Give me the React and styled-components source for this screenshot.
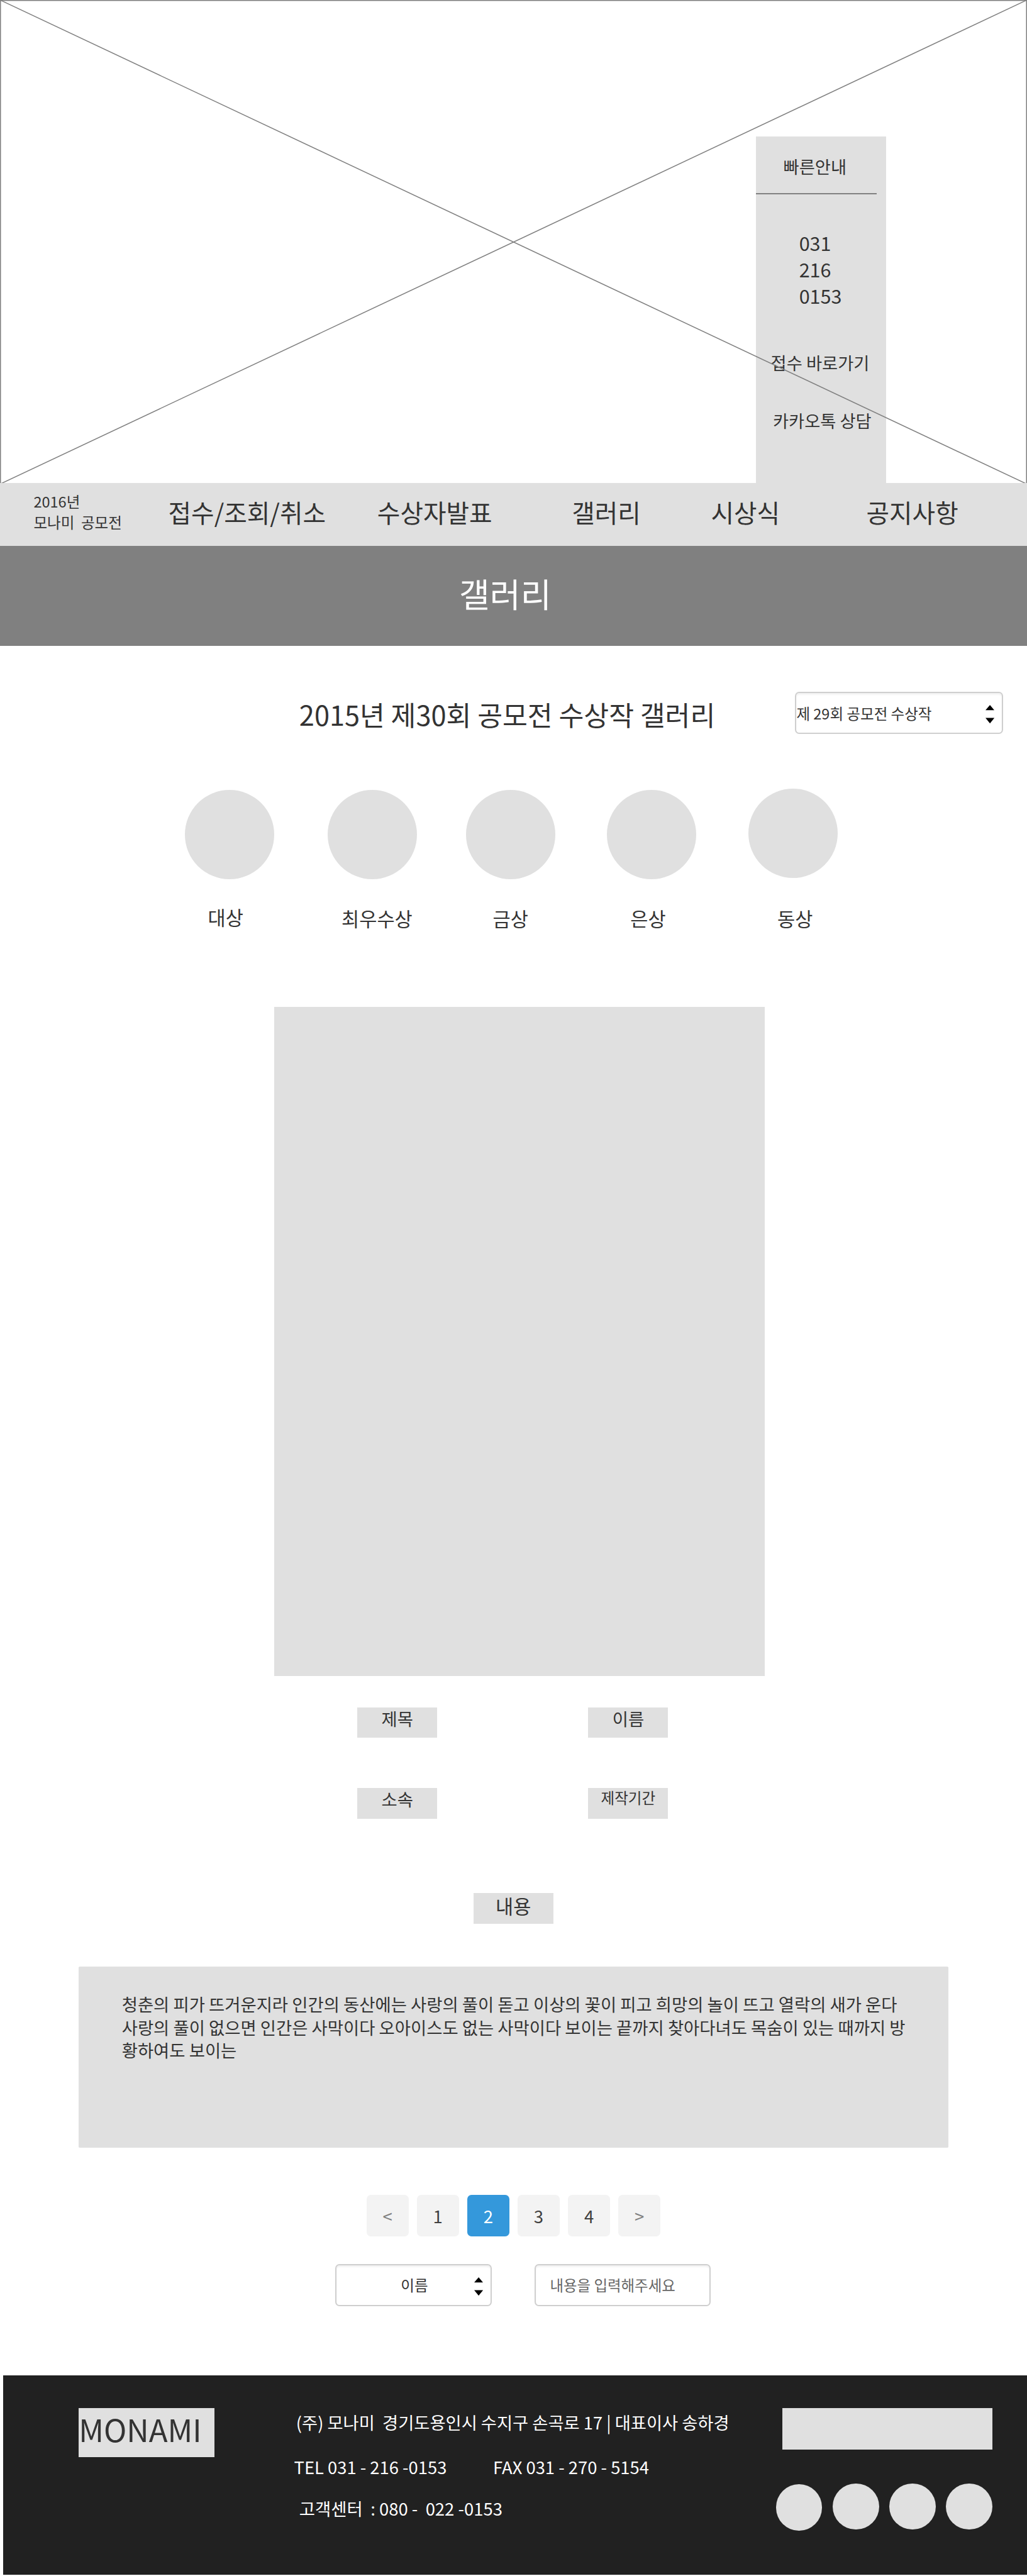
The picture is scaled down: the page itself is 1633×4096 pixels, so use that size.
import React from "react";
import styled, { createGlobalStyle, css } from "styled-components";

// Design units are scaled to the 1633px wide page.
const SCALE = 1633 / 1956;
const u = (n) => `${Math.round(n * SCALE * 1000) / 1000}px`;

const color = {
  block: "#e0e0e0",
  gray: "#808080",
  ink: "#333333",
  footer: "#212121",
  blue: "#3498db",
  border: "#cccccc",
};

const GlobalStyle = createGlobalStyle`
  * { box-sizing: border-box; }
  html, body { margin: 0; padding: 0; background: #fff; }
  body {
    font-family: "Noto Sans CJK KR", "Noto Sans", sans-serif;
    color: ${color.ink};
    overflow-x: hidden;
  }
  button, input { font-family: inherit; }
`;

const Page = styled.div`
  width: ${u(1956)};
  height: 4096px;
  overflow: hidden;
  display: flex;
  flex-direction: column;
`;

const Text = styled.div`
  font-size: ${(p) => u(p.$size)};
  line-height: ${(p) => u(p.$line || 48)};
  margin-top: ${(p) => u(p.$top || 0)};
  margin-left: ${(p) => u(p.$left || 0)};
  white-space: pre;
`;

/* Hero */
const Hero = styled.section`
  position: relative;
  height: ${u(920)};
  padding: ${u(260)} 0 0 ${u(1440)};
  overflow: hidden;
`;

const HeroCross = styled.svg`
  position: absolute;
  inset: 0;
  width: 100%;
  height: 100%;
  pointer-events: none;
`;

const QuickPanel = styled.aside`
  width: ${u(248)};
  height: ${u(660)};
  padding-top: ${u(32)};
  background: ${color.block};
`;

const PanelRule = styled.hr`
  width: ${u(230)};
  height: ${u(2)};
  margin: ${u(28)} 0 0;
  border: 0;
  background: ${color.gray};
`;

/* Navigation */
const Nav = styled.nav`
  display: flex;
  height: ${u(120)};
  background: ${color.block};
`;

const Brand = styled.div`
  width: ${u(320.5)};
  padding: ${u(15)} 0 0 ${u(64)};
`;

const NavLink = styled.a`
  width: ${(p) => u(p.$width)};
  padding-top: ${u(24.5)};
  font-size: ${u(47.6)};
  line-height: ${u(60)};
  white-space: nowrap;
`;

const TitleBar = styled.header`
  height: ${u(190)};
  padding: ${u(50)} 0 0 ${u(874)};
  background: ${color.gray};
  color: #fff;
`;

/* Controls */
const controlBox = css`
  height: ${u(80)};
  border: 2px solid #cfcfcf;
  border-radius: ${u(8)};
  background: #fff;
  box-shadow: inset 0 ${u(3)} ${u(3)} rgba(0, 0, 0, 0.06);
`;

const SelectBox = styled.div`
  ${controlBox}
  display: flex;
  justify-content: space-between;
  width: ${(p) => u(p.$width)};
  padding-right: ${u(14.2)};
  padding-left: ${(p) => u(p.$indent)};
  color: ${color.ink};
`;

const Arrows = styled.svg`
  width: ${u(17)};
  height: ${u(35)};
  margin-top: ${u(22.8)};
`;

const SearchInput = styled.input`
  ${controlBox}
  width: ${u(335.5)};
  margin-left: ${u(81)};
  padding: 0 0 ${u(1)} ${u(27)};
  font-size: ${u(28.1)};
  outline: none;
  &::placeholder { color: #666; opacity: 1; }
`;

/* Gallery */
const GalleryHead = styled.div`
  display: flex;
  padding-top: ${u(88)};
  height: ${u(272)};
`;

const GalleryTitle = styled.h2`
  width: ${u(944.5)};
  margin: ${u(11)} 0 0 ${u(570)};
  font-size: ${u(51.9)};
  font-weight: 400;
  line-height: ${u(64)};
  white-space: nowrap;
`;

const Awards = styled.div`
  display: flex;
  height: ${u(416)};
  padding-left: ${u(352)};
`;

const Award = styled.div`
  width: ${(p) => u(p.$width)};
  margin-top: ${(p) => u(p.$raise ? 0 : 2)};
`;

const Circle = styled.div`
  width: ${(p) => u(p.$size)};
  height: ${(p) => u(p.$size)};
  margin-top: ${(p) => u(p.$top || 0)};
  border-radius: 50%;
  background: ${color.block};
`;

const Artwork = styled.div`
  width: ${u(934)};
  height: ${u(1274)};
  margin-left: ${u(522)};
  background: ${color.block};
`;

const Details = styled.div`
  display: grid;
  grid-template-columns: ${u(440)} ${u(152)};
  grid-template-rows: ${u(154)} ${u(58)};
  margin: ${u(60)} 0 0 ${u(680)};
`;

const Tag = styled.div`
  width: ${u(152)};
  height: ${u(58)};
  padding-left: ${(p) => u(p.$indent)};
  background: ${color.block};
`;

const ContentTagRow = styled.div`
  margin: ${u(142)} 0 0 ${u(902)};
`;

const Description = styled.p`
  width: ${u(1656)};
  height: ${u(344)};
  margin: ${u(82)} 0 0 ${u(150)};
  padding: ${u(48.5)} 0 0 ${u(82)};
  border-radius: ${u(2)};
  background: ${color.block};
  font-size: ${u(32.85)};
  line-height: ${u(44)};
  white-space: pre;
`;

/* Paging and search */
const Pagination = styled.div`
  display: flex;
  gap: ${u(16)};
  margin: ${u(90)} 0 0 ${u(698)};
`;

const PageButton = styled.button`
  width: ${u(80)};
  height: ${u(80)};
  padding: 0;
  border: 0;
  border-radius: ${u(8)};
  background: ${(p) => (p.$active ? color.blue : "#f3f3f3")};
  color: ${(p) => (p.$active ? "#fff" : p.$arrow ? color.gray : "#404040")};
  font-size: ${u(33)};
  line-height: ${u(80)};
`;

const SearchRow = styled.div`
  display: flex;
  margin: ${u(52)} 0 0 ${u(638)};
`;

/* Footer */
const Footer = styled.footer`
  display: flex;
  height: ${u(380)};
  margin: ${u(132)} 0 0 ${u(6)};
  padding: ${u(62)} 0 0 ${u(144)};
  background: ${color.footer};
  color: #fff;
`;

const Logo = styled.div`
  width: ${u(258)};
  height: ${u(94)};
  background: ${color.block};
  color: ${color.ink};
`;

const Contact = styled.address`
  width: ${u(1070)};
  padding-left: ${u(152)};
  font-style: normal;
`;

const FooterSide = styled.div`
  width: ${u(412)};
`;

const FooterBanner = styled.div`
  width: ${u(400)};
  height: ${u(80)};
  margin-left: ${u(12)};
  background: ${color.block};
`;

const SocialRow = styled.div`
  display: flex;
  gap: ${u(20)};
  margin-top: ${u(64)};
`;

const UpDown = () => (
  <Arrows viewBox="0 0 17 35">
    <path d="M8.5 0 17 10H0z M0 24.5h17L8.5 35z" fill="#000" />
  </Arrows>
);

const navItems = [
  { label: "접수/조회/취소", width: 398 },
  { label: "수상자발표", width: 370.5 },
  { label: "갤러리", width: 265 },
  { label: "시상식", width: 296 },
  { label: "공지사항", width: 240 },
];

const awards = [
  { label: "대상", width: 272, indent: 44, top: 49 },
  { label: "최우수상", width: 264, indent: 26.5, top: 51 },
  { label: "금상", width: 268, indent: 50.5, top: 51 },
  { label: "은상", width: 270, indent: 44.5, top: 51 },
  { label: "동상", width: 170, indent: 54.5, top: 53, raise: true },
];

const description = [
  "청춘의 피가 뜨거운지라 인간의 동산에는 사랑의 풀이 돋고 이상의 꽃이 피고 희망의 놀이 뜨고 열락의 새가 운다",
  "사랑의 풀이 없으면 인간은 사막이다 오아이스도 없는 사막이다 보이는 끝까지 찾아다녀도 목숨이 있는 때까지 방",
  "황하여도 보이는",
].join("\n");

export default function App() {
  return (
    <Page>
      <GlobalStyle />
      <Hero>
        <QuickPanel>
          <Text $size={32.7} $left={52}>빠른안내</Text>
          <PanelRule />
          <Text $size={36.6} $line={50} $top={69} $left={82}>{"031\n216\n0153"}</Text>
          <Text $size={32.7} $top={77.5} $left={28}>접수 바로가기</Text>
          <Text $size={32.7} $top={62} $left={32}>카카오톡 상담</Text>
        </QuickPanel>
        <HeroCross viewBox="0 0 1956 920" preserveAspectRatio="none">
          <g fill="none" stroke={color.gray} strokeWidth="1.8">
            <rect x="0.9" y="0.9" width="1954.2" height="921" />
            <path d="M0 0 1956 922M1956 0 0 922" />
          </g>
        </HeroCross>
      </Hero>

      <Nav>
        <Brand>
          <Text $size={28.2} $line={40}>{"2016년\n모나미  공모전"}</Text>
        </Brand>
        {navItems.map((item) => (
          <NavLink key={item.label} $width={item.width}>{item.label}</NavLink>
        ))}
      </Nav>
      <TitleBar>
        <Text $size={63.8} $line={80}>갤러리</Text>
      </TitleBar>

      <GalleryHead>
        <GalleryTitle>2015년 제30회 공모전 수상작 갤러리</GalleryTitle>
        <SelectBox $width={395.5} $indent={0}>
          <Text $size={28.2} $line={40} $top={19}>제 29회 공모전 수상작</Text>
          <UpDown />
        </SelectBox>
      </GalleryHead>

      <Awards>
        {awards.map((a) => (
          <Award key={a.label} $width={a.width} $raise={a.raise}>
            <Circle $size={170} />
            <Text $size={36.7} $top={a.top} $left={a.indent}>{a.label}</Text>
          </Award>
        ))}
      </Awards>

      <Artwork />

      <Details>
        <Tag $indent={46.5}><Text $size={32.8} $line={41}>제목</Text></Tag>
        <Tag $indent={46.5}><Text $size={32.8} $line={41}>이름</Text></Tag>
        <Tag $indent={46.5}><Text $size={32.8} $line={42}>소속</Text></Tag>
        <Tag $indent={24.5}><Text $size={28.2} $line={37.5}>제작기간</Text></Tag>
      </Details>
      <ContentTagRow>
        <Tag $indent={42}><Text $size={36.7} $line={48}>내용</Text></Tag>
      </ContentTagRow>

      <Description>{description}</Description>

      <Pagination>
        <PageButton $arrow>&lt;</PageButton>
        <PageButton>1</PageButton>
        <PageButton $active>2</PageButton>
        <PageButton>3</PageButton>
        <PageButton>4</PageButton>
        <PageButton $arrow>&gt;</PageButton>
      </Pagination>

      <SearchRow>
        <SelectBox $width={299} $indent={123}>
          <Text $size={28.2} $line={40} $top={18.5}>이름</Text>
          <UpDown />
        </SelectBox>
        <SearchInput placeholder="내용을 입력해주세요" />
      </SearchRow>

      <Footer>
        <Logo>
          <Text $size={58.7} $line={78}>MONAMI</Text>
        </Logo>
        <Contact>
          <Text $size={32.7} $top={2.5} $left={4}>(주) 모나미  경기도용인시 수지구 손곡로 17 | 대표이사 송하경</Text>
          <Text $size={32.8} $top={38} $left={0}>TEL 031 - 216 -0153            FAX 031 - 270 - 5154</Text>
          <Text $size={32.9} $top={30} $left={10}>고객센터  : 080 -  022 -0153</Text>
        </Contact>
        <FooterSide>
          <FooterBanner />
          <SocialRow>
            <Circle $size={88} $top={2} />
            <Circle $size={88} />
            <Circle $size={88} />
            <Circle $size={88} />
          </SocialRow>
        </FooterSide>
      </Footer>
    </Page>
  );
}
